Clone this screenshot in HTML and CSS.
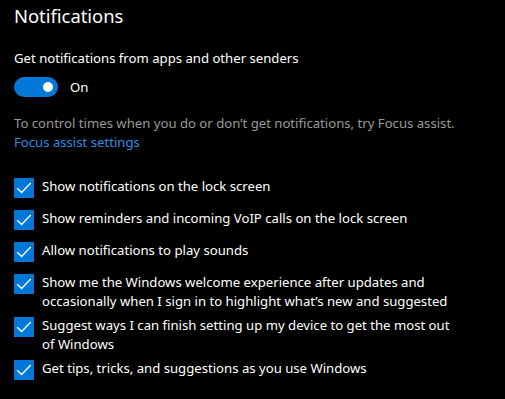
FILE: index.html
```html
<!DOCTYPE html>
<html lang="en">
<head>
<meta charset="utf-8">
<title>Notifications</title>
<link rel="stylesheet" href="styles.css">
</head>
<body>
<main class="page">
  <h1 class="title">Notifications</h1>
  <p class="label">Get notifications from apps and other senders</p>
  <div class="toggle-row">
    <span class="toggle"><span class="knob"></span></span>
    <span class="toggle-text">On</span>
  </div>
  <p class="hint">To control times when you do or don’t get notifications, try Focus assist.</p>
  <a class="link" href="#">Focus assist settings</a>
  <ul class="checks">
    <li class="check"><span class="box"><svg viewBox="0 0 20 20"><polyline points="3.2,10.2 7.6,14.4 16.8,5"/></svg></span><span class="check-text">Show notifications on the lock screen</span></li>
    <li class="check"><span class="box"><svg viewBox="0 0 20 20"><polyline points="3.2,10.2 7.6,14.4 16.8,5"/></svg></span><span class="check-text">Show reminders and incoming VoIP calls on the lock screen</span></li>
    <li class="check"><span class="box"><svg viewBox="0 0 20 20"><polyline points="3.2,10.2 7.6,14.4 16.8,5"/></svg></span><span class="check-text">Allow notifications to play sounds</span></li>
    <li class="check"><span class="box"><svg viewBox="0 0 20 20"><polyline points="3.2,10.2 7.6,14.4 16.8,5"/></svg></span><span class="check-text">Show me the Windows welcome experience after updates and<br>occasionally when I sign in to highlight what’s new and suggested</span></li>
    <li class="check"><span class="box"><svg viewBox="0 0 20 20"><polyline points="3.2,10.2 7.6,14.4 16.8,5"/></svg></span><span class="check-text">Suggest ways I can finish setting up my device to get the most out<br>of Windows</span></li>
    <li class="check"><span class="box"><svg viewBox="0 0 20 20"><polyline points="3.2,10.2 7.6,14.4 16.8,5"/></svg></span><span class="check-text">Get tips, tricks, and suggestions as you use Windows</span></li>
  </ul>
</main>
</body>
</html>
```

FILE: styles.css
```css
html, body {
  margin: 0;
  padding: 0;
  background: #000;
}
body {
  width: 505px;
  height: 399px;
  overflow: hidden;
  font-family: "Noto Sans", "Open Sans", sans-serif;
  color: #fff;
  font-size: 13.15px;
}
.page {
  padding: 2px 0 0 14px;
}
.title {
  margin: 0;
  font-size: 18.4px;
  font-weight: 400;
  line-height: 28px;
}
.label {
  margin: 18px 0 0;
  line-height: 20px;
}
.toggle-row {
  display: flex;
  align-items: center;
  margin-top: 9px;
  height: 20px;
}
.toggle {
  width: 44px;
  height: 20px;
  border-radius: 10px;
  background: #0078d7;
  display: flex;
  align-items: center;
  justify-content: flex-end;
  padding-right: 5px;
  box-sizing: border-box;
}
.knob {
  width: 10px;
  height: 10px;
  border-radius: 50%;
  background: #fff;
}
.toggle-text {
  margin-left: 12px;
  line-height: 20px;
}
.hint {
  margin: 17px 0 0;
  color: #999;
  line-height: 19px;
}
.link {
  display: block;
  color: #2b8fe0;
  text-decoration: none;
  line-height: 19px;
}
.checks {
  list-style: none;
  margin: 20px 0 0;
  padding: 0;
}
.check {
  display: flex;
  align-items: flex-start;
  min-height: 32px;
}
.box {
  flex: none;
  width: 20px;
  height: 20px;
  background: #0078d7;
  margin-top: 6px;
}
.box svg {
  display: block;
  width: 20px;
  height: 20px;
  fill: none;
  stroke: #fff;
  stroke-width: 1.4;
}
.check-text {
  margin-left: 8px;
  padding-top: 5px;
  line-height: 19px;
}
```
